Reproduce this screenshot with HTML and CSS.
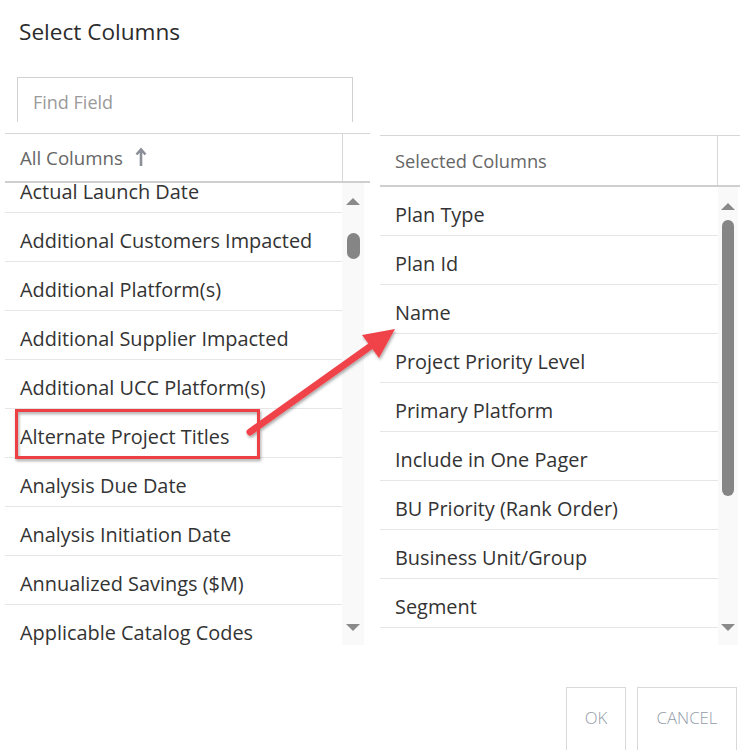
FILE: index.html
```html
<!DOCTYPE html>
<html>

<head>
    <meta charset="utf-8">
    <title>Select Columns</title>
    <link rel="stylesheet" href="styles.css">
</head>

<body>
    <div class="dialog">
        <h2 class="title">Select Columns</h2>
        <div class="search">
            <input type="text" class="search-input" placeholder="Find Field">
        </div>

        <div class="panels">
            <div class="panel panel-all">
                <div class="col-head">
                    <div class="col-label">All Columns
                        <svg class="sort-icon" width="12" height="20" viewBox="0 0 12 20">
                            <path d="M6 19V3M1.5 7.5L6 2.5l4.5 5" fill="none" stroke="#8b8f97" stroke-width="2.6" />
                        </svg>
                    </div>
                    <div class="col-spare"></div>
                </div>
                <div class="list-wrap">
                    <div class="list">
                        <ul class="rows shifted">
                            <li>Actual Launch Date</li>
                            <li>Additional Customers Impacted</li>
                            <li>Additional Platform(s)</li>
                            <li>Additional Supplier Impacted</li>
                            <li>Additional UCC Platform(s)</li>
                            <li>Alternate Project Titles</li>
                            <li>Analysis Due Date</li>
                            <li>Analysis Initiation Date</li>
                            <li>Annualized Savings ($M)</li>
                            <li>Applicable Catalog Codes</li>
                        </ul>
                    </div>
                    <div class="scrollbar">
                        <span class="arrow-up"></span>
                        <div class="track">
                            <div class="thumb thumb-left"></div>
                        </div>
                        <span class="arrow-down"></span>
                    </div>
                </div>
            </div>

            <div class="panel panel-selected">
                <div class="col-head">
                    <div class="col-label small">Selected Columns</div>
                    <div class="col-spare"></div>
                </div>
                <div class="list-wrap">
                    <div class="list">
                        <ul class="rows">
                            <li>Plan Type</li>
                            <li>Plan Id</li>
                            <li>Name</li>
                            <li>Project Priority Level</li>
                            <li>Primary Platform</li>
                            <li>Include in One Pager</li>
                            <li>BU Priority (Rank Order)</li>
                            <li>Business Unit/Group</li>
                            <li>Segment</li>
                        </ul>
                    </div>
                    <div class="scrollbar">
                        <span class="arrow-up"></span>
                        <div class="track">
                            <div class="thumb thumb-right"></div>
                        </div>
                        <span class="arrow-down"></span>
                    </div>
                </div>
            </div>
        </div>

        <div class="buttons">
            <button class="btn btn-ok">OK</button>
            <button class="btn btn-cancel">CANCEL</button>
        </div>

        <!-- callout drawn over the lists -->
        <svg class="callout" width="740" height="750" viewBox="0 0 740 750">
            <defs>
                <filter id="shadow" x="-20%" y="-20%" width="140%" height="140%">
                    <feDropShadow dx="1" dy="2" stdDeviation="1.5" flood-color="#000" flood-opacity="0.35" />
                </filter>
            </defs>
            <g filter="url(#shadow)">
                <rect x="16.5" y="410.5" width="242" height="47" fill="none" stroke="#ec3f45" stroke-width="3" />
                <line x1="250" y1="432" x2="375" y2="343" stroke="#f0434a" stroke-width="7" stroke-linecap="round" />
                <polygon points="395,329 379,358 362,335" fill="#f0434a" />
            </g>
        </svg>
    </div>
</body>

</html>
```

FILE: styles.css
```css
* {
    box-sizing: border-box;
}

body {
    margin: 0;
    background: #fff;
    font-family: "Open Sans", "Noto Sans", sans-serif;
    color: #333;
}

.dialog {
    position: relative;
    width: 740px;
    height: 750px;
    overflow: hidden;
}

.title {
    margin: 0;
    padding: 16px 0 0 19px;
    font-size: 22.6px;
    font-weight: 400;
    color: #2b2b2b;
    line-height: 32px;
}

.search {
    margin: 29px 0 0 17px;
    width: 336px;
    height: 45px;
    border: 1px solid #d2d2d2;
    border-bottom: 0;
}

.search-input {
    width: 100%;
    height: 100%;
    border: 0;
    outline: none;
    padding: 3px 15px 0;
    font-family: inherit;
    font-size: 18px;
    color: #333;
}

.search-input::placeholder {
    color: #9a9a9a;
}

.panels {
    display: flex;
    align-items: flex-start;
    margin-top: 11px;
    gap: 10px;
}

.panel-all {
    margin-left: 5px;
    width: 365px;
}

.panel-selected {
    margin-top: 2px;
    width: 360px;
}

.col-head {
    display: flex;
    height: 50px;
    border-top: 1px solid #d6d6d6;
    border-bottom: 2px solid #cfcfcf;
}

.panel-selected .col-head {
    height: 52px;
}

.col-label {
    flex: 0 0 338px;
    display: flex;
    align-items: center;
    gap: 12px;
    padding-left: 15px;
    font-size: 18.7px;
    color: #666;
    border-right: 1px solid #d6d6d6;
}

.col-label.small {
    font-size: 18.3px;
}

.sort-icon {
    margin-top: -2px;
}

.col-spare {
    flex: 1;
}

.list-wrap {
    display: flex;
    height: 462px;
}

.panel-selected .list-wrap {
    height: 458px;
}

.list {
    width: 337px;
    overflow: hidden;
}

.panel-selected .list {
    width: 338px;
}

.rows {
    list-style: none;
    margin: 0;
    padding: 0;
}

.rows.shifted {
    margin-top: -19px;
}

.rows li {
    height: 49px;
    padding: 7px 0 0 15px;
    line-height: 41px;
    font-size: 19.9px;
    color: #333;
    border-bottom: 1px solid #e6e6e6;
    white-space: nowrap;
}

.scrollbar {
    width: 22px;
    background: #f9f9f9;
    display: flex;
    flex-direction: column;
    align-items: center;
    padding: 15px 0 14px;
}

.panel-selected .scrollbar {
    width: 20px;
    padding-top: 16px;
}

.track {
    flex: 1;
    width: 100%;
    display: flex;
    justify-content: center;
}

.thumb {
    width: 13px;
    background: #858585;
    border-radius: 7px;
}

.thumb-left {
    margin-top: 28px;
    height: 26px;
}

.thumb-right {
    width: 12px;
    margin-top: 10px;
    height: 276px;
}

.arrow-up,
.arrow-down {
    width: 0;
    height: 0;
    border-left: 7px solid transparent;
    border-right: 7px solid transparent;
}

.arrow-up {
    border-bottom: 7px solid #8a8a8a;
}

.arrow-down {
    border-top: 7px solid #8a8a8a;
}

.buttons {
    display: flex;
    justify-content: flex-end;
    gap: 11px;
    margin-top: 42px;
    padding-right: 3px;
}

.btn {
    height: 64px;
    padding: 0 0 4px;
    background: #fff;
    border: 1px solid #d9d9d9;
    border-radius: 0;
    font-family: inherit;
    font-size: 16.8px;
    font-weight: 300;
    color: #949ca8;
    cursor: pointer;
}

.btn-ok {
    width: 60px;
}

.btn-cancel {
    width: 100px;
}

.callout {
    position: absolute;
    left: 0;
    top: 0;
    pointer-events: none;
}
```
